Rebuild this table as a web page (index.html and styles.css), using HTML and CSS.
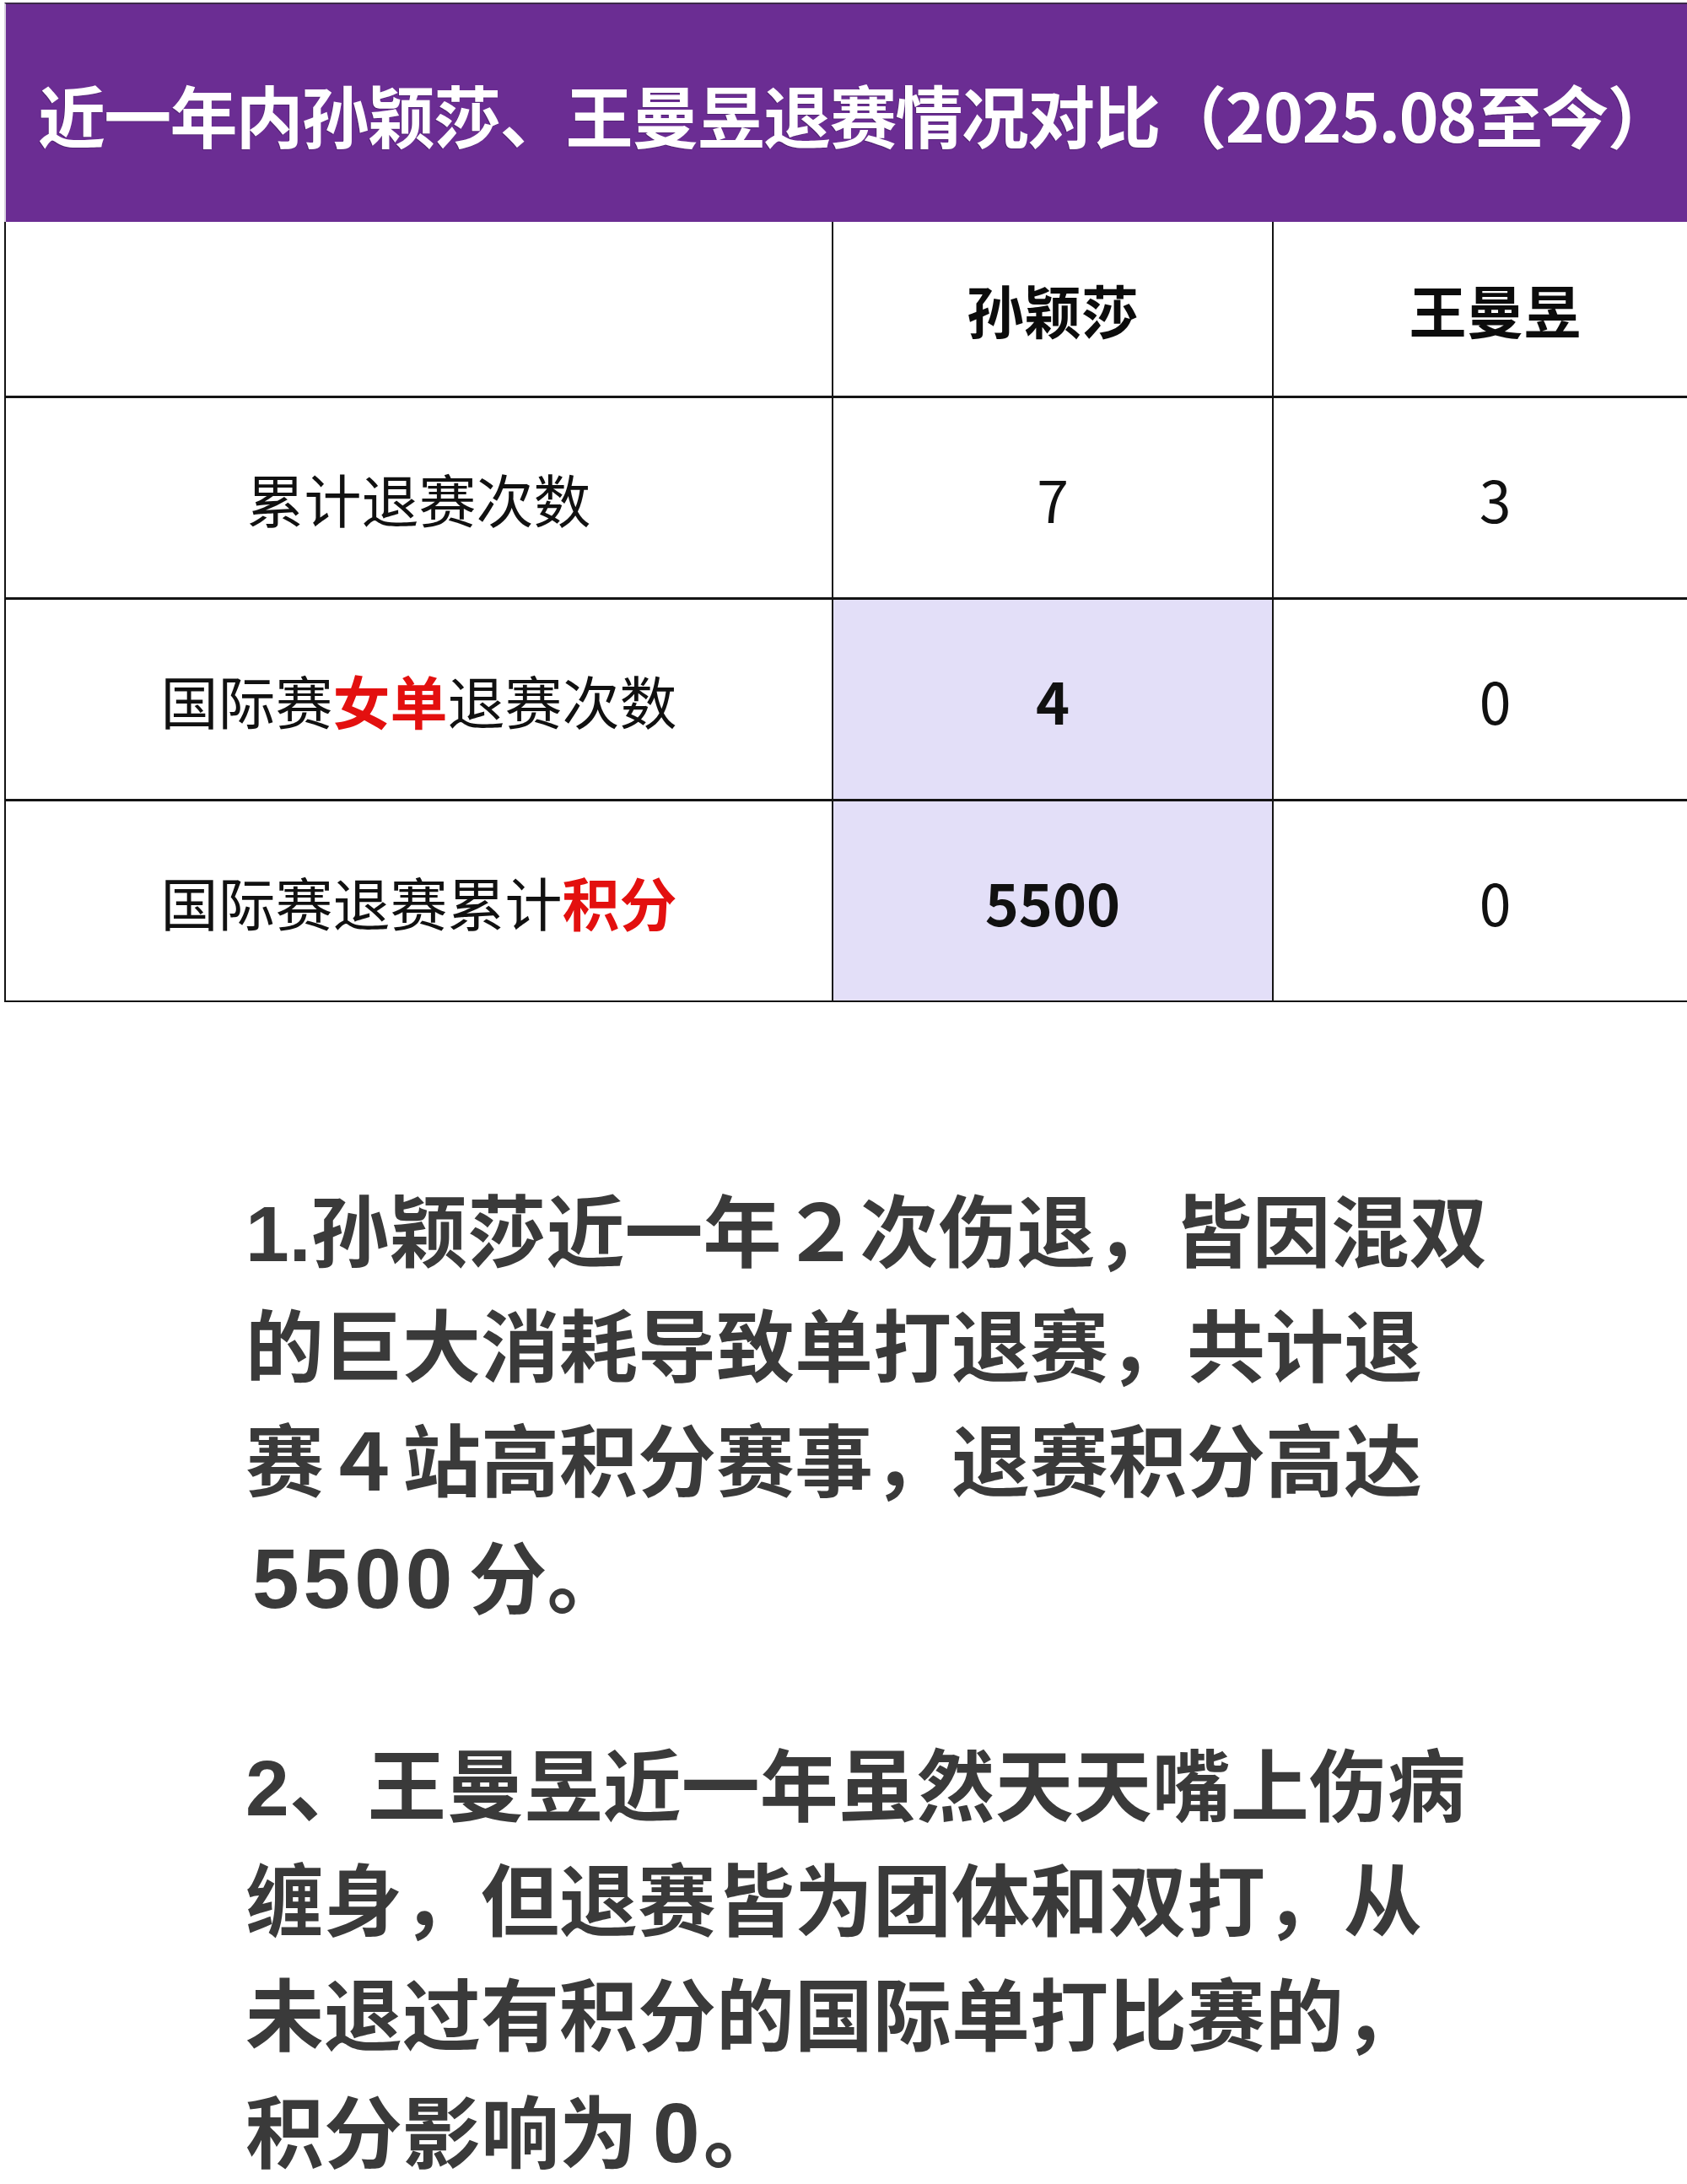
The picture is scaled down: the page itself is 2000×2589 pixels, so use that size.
FILE: index.html
```html
<!DOCTYPE html>
<html lang="zh-CN">
<head>
<meta charset="utf-8">
<title>近一年内孙颖莎、王曼昱退赛情况对比</title>
<link rel="stylesheet" href="styles.css">
</head>
<body>
<div class="sheet">
  <div class="title"><span class="title-text">近一年内孙颖莎、王曼昱退赛情况对比（2025.08至今）</span></div>
  <table class="grid">
    <colgroup>
      <col class="c1"><col class="c2"><col class="c3">
    </colgroup>
    <tr class="r-head">
      <td></td>
      <td class="name">孙颖莎</td>
      <td class="name">王曼昱</td>
    </tr>
    <tr class="r-body">
      <td>累计退赛次数</td>
      <td>7</td>
      <td>3</td>
    </tr>
    <tr class="r-body">
      <td>国际赛<span class="hl">女单</span>退赛次数</td>
      <td class="mark strong">4</td>
      <td>0</td>
    </tr>
    <tr class="r-body">
      <td>国际赛退赛累计<span class="hl">积分</span></td>
      <td class="mark strong">5500</td>
      <td>0</td>
    </tr>
  </table>
</div>
<div class="notes">
  <p>1.孙颖莎近一年２次伤退，皆因混双<br>的巨大消耗导致单打退赛，共计退<br>赛４站高积分赛事，退赛积分高达<br><span class="num big">5500</span>分。</p>
  <p>2、王曼昱近一年虽然天天嘴上伤病<br>缠身，但退赛皆为团体和双打，从<br>未退过有积分的国际单打比赛的，<br>积分影响为<span class="num zero">0</span>。</p>
</div>
</body>
</html>
```

FILE: styles.css
```css
html, body {
  margin: 0;
  padding: 0;
  background: #ffffff;
}
body {
  width: 2000px;
  height: 2589px;
  overflow: hidden;
  font-family: "Noto Sans CJK SC", "Noto Sans", sans-serif;
}
.sheet {
  margin: 3px 0 0 5px;
  width: 2030px;
}
.title {
  height: 260px;
  background: #6b2d93;
  border-top: 2px solid #3b2a48;
  border-left: 2px solid #d8d2de;
  box-sizing: border-box;
  display: flex;
  align-items: center;
  padding-left: 38px;
}
.title-text {
  color: #ffffff;
  font-size: 80px;
  font-weight: 700;
  letter-spacing: -1.8px;
  white-space: nowrap;
  text-shadow: -1px 1px 0 rgba(40, 20, 60, 0.35);
}
.grid {
  border-collapse: collapse;
  table-layout: fixed;
  width: 2030px;
}
.grid col.c1 { width: 981px; }
.grid col.c2 { width: 522px; }
.grid col.c3 { width: 527px; }
.grid td {
  border: 2px solid #141414;
  border-top-width: 3px;
  text-align: center;
  vertical-align: middle;
  font-size: 68px;
  font-weight: 400;
  color: #111111;
  padding: 0;
  white-space: nowrap;
}
.grid tr.r-head td {
  border-top: 0;
  height: 206px;
}
.grid tr.r-body td {
  height: 236px;
}
.grid td.name {
  font-weight: 700;
  color: #0c0c0c;
}
.grid td.mark {
  background: #e3dff8;
}
.grid td.strong {
  font-weight: 700;
}
.hl {
  color: #e3100f;
  font-weight: 700;
}
.notes {
  margin: 207px 0 0 291px;
  font-family: "Liberation Sans", "Noto Sans CJK SC", sans-serif;
  font-size: 93px;
  font-weight: 700;
  line-height: 136px;
  color: #3a3a3a;
  white-space: nowrap;
}
.notes p {
  margin: 0 0 110px 0;
}
.notes p:last-child {
  margin-bottom: 0;
}
.num {
  font-size: 100px;
}
.num.big {
  letter-spacing: 5px;
  margin-left: 8px;
  margin-right: 14px;
}
.num.zero {
  margin-left: 18px;
  margin-right: 4px;
}
```
